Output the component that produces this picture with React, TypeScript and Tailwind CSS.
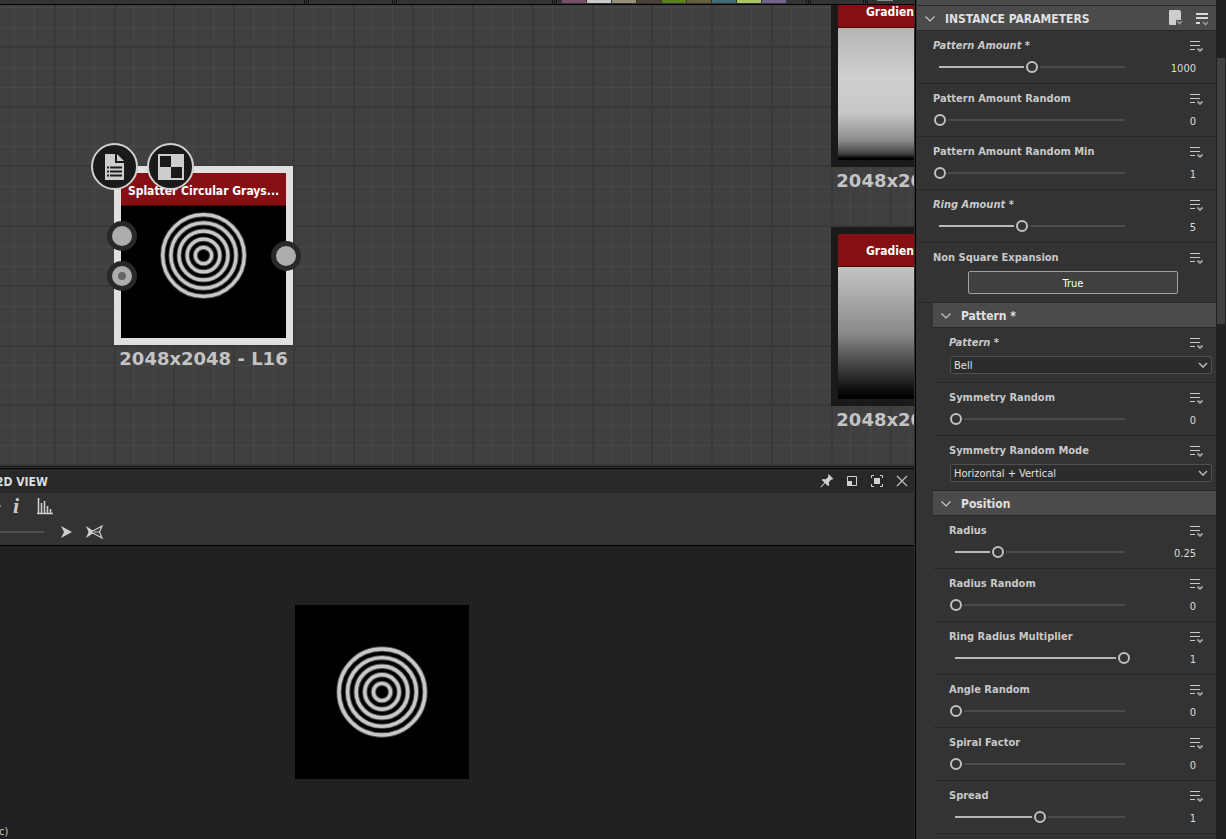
import React, { useState } from 'react';

type SliderParam = { kind: 'slider'; label: string; value: number; min: number; max: number; step: number; changed?: boolean };
type SelectParam = { kind: 'select'; label: string; value: string; options: string[]; changed?: boolean };
type Param = SliderParam | SelectParam;

const instanceParams: SliderParam[] = [
  { kind: 'slider', label: 'Pattern Amount', value: 1000, min: 0, max: 2000, step: 1, changed: true },
  { kind: 'slider', label: 'Pattern Amount Random', value: 0, min: 0, max: 1, step: 0.01 },
  { kind: 'slider', label: 'Pattern Amount Random Min', value: 1, min: 1, max: 10, step: 1 },
  { kind: 'slider', label: 'Ring Amount', value: 5, min: 1, max: 10, step: 1, changed: true },
];

const patternParams: Param[] = [
  { kind: 'select', label: 'Pattern', value: 'Bell', options: ['Bell'], changed: true },
  { kind: 'slider', label: 'Symmetry Random', value: 0, min: 0, max: 1, step: 0.01 },
  { kind: 'select', label: 'Symmetry Random Mode', value: 'Horizontal + Vertical', options: ['Horizontal + Vertical'] },
];

const positionParams: Param[] = [
  { kind: 'slider', label: 'Radius', value: 0.25, min: 0, max: 1, step: 0.01 },
  { kind: 'slider', label: 'Radius Random', value: 0, min: 0, max: 1, step: 0.01 },
  { kind: 'slider', label: 'Ring Radius Multiplier', value: 1, min: 0, max: 1, step: 0.01 },
  { kind: 'slider', label: 'Angle Random', value: 0, min: 0, max: 1, step: 0.01 },
  { kind: 'slider', label: 'Spiral Factor', value: 0, min: 0, max: 1, step: 0.01 },
  { kind: 'slider', label: 'Spread', value: 1, min: 0, max: 2, step: 0.01 },
];

const swatches = ['bg-[#7a4f6b]', 'bg-[#cacaca]', 'bg-[#979078]', 'bg-[#4b4135]', 'bg-[#5b801d]', 'bg-[#675f3e]', 'bg-[#3f6f72]', 'bg-[#a9c766]', 'bg-[#73648f]'];

const MenuIcon: React.FC = () => (
  <svg className="w-4 h-4" viewBox="0 0 16 16" fill="none">
    <path d="M1 3.5h10M1 7.5h10M1 11.5h5" stroke="#c8c8c8" strokeWidth="1.2" />
    <path d="M8.500 10.500l2.500 2.500 2.500-2.500" stroke="#a0a0a0" strokeWidth="1.800" />
  </svg>
);

const Chevron: React.FC = () => (
  <svg className="w-3 h-3 shrink-0" viewBox="0 0 12 12" fill="none">
    <path d="M1.500 3.500L6 8l4.500-4.500" stroke="#c8c8c8" strokeWidth="1.2" />
  </svg>
);

// Concentric bell-shaped rings, softer on the edges
const Rings: React.FC = () => (
  <svg className="block w-full h-full bg-black" viewBox="0 0 174 174" fill="none">
    {[1, 2, 3, 4, 5].map((n) => (
      <g key={n}>
        <circle cx="87" cy="87" r={n * 8.6} stroke="#505050" strokeWidth="5.4" />
        <circle cx="87" cy="87" r={n * 8.6} stroke="#c9c9c9" strokeWidth="3.4" />
      </g>
    ))}
  </svg>
);

const Grid: React.FC = () => {
  const step = 59.75 / 3;
  const lines = Array.from({ length: 130 }, (_, i) => i);
  return (
    <svg className="absolute inset-0 w-full h-full" shapeRendering="crispEdges">
      {lines.filter((i) => i % 3 !== 0).map((i) => (
        <g key={i} fill="#484848">
          <rect x={Math.round(-6 + i * step)} y="0" width="1" height="100%" />
          <rect x="0" y={Math.round(-18 + i * step)} width="100%" height="1" />
        </g>
      ))}
      {lines.filter((i) => i % 3 === 0).map((i) => (
        <g key={i} fill="#393939">
          <rect x={Math.round(-6 + i * step)} y="0" width="2" height="100%" />
          <rect x="0" y={Math.round(-19 + i * step)} width="100%" height="2" />
        </g>
      ))}
    </svg>
  );
};

const Port: React.FC<{ className: string; dot?: boolean }> = ({ className, dot }) => (
  <div className={`absolute w-[30px] h-[30px] rounded-full bg-[#282828] flex items-center justify-center ${className}`}>
    <div className="w-5 h-5 rounded-full bg-[#adadad] flex items-center justify-center">
      {dot && <div className="w-2 h-2 rounded-full bg-[#666]" />}
    </div>
  </div>
);

const GraphNode: React.FC<{ title: string; place: string; frame: string; titleClass: string; children: React.ReactNode }> = ({ title, place, frame, titleClass, children }) => (
  <div className={`absolute w-[179px] ${place}`}>
    <div className={`h-[179px] border-[7px] ${frame} flex flex-col`}>
      <div className={`h-[33px] shrink-0 bg-[#850f13] border-b border-[#4a0a0c] flex items-center text-white text-xs font-bold whitespace-nowrap ${titleClass}`}>{title}</div>
      <div className="flex-1 min-h-0 relative">{children}</div>
    </div>
    <div className="font-['DejaVu_Sans',sans-serif] text-lg leading-7 font-bold text-[#c4c4c4] text-center whitespace-nowrap">2048x2048 - L16</div>
  </div>
);

const GraphView: React.FC = () => (
  <div className="relative h-[461px] bg-[#404040] overflow-hidden">
    <Grid />
    <GraphNode title="Gradient" place="left-[831px] -top-[17px]" frame="border-[#1a1a1a]" titleClass="pl-7 pt-0.5">
      <div className="h-full bg-[linear-gradient(#b5b5b5,#cfcfcf_38%,#c6c6c6_65%,#8c8c8c_85%,#444_95%,#000_99%)]" />
    </GraphNode>
    <GraphNode title="Gradient" place="left-[831px] top-[222px]" frame="border-[#1a1a1a]" titleClass="pl-7 pt-0.5">
      <div className="h-full bg-[linear-gradient(#c4c4c4,#8a8a8a_50%,#000_98%)]" />
    </GraphNode>
    <GraphNode title="Splatter Circular Grays..." place="left-[114px] top-[161px]" frame="border-[#e0e0e0]" titleClass="justify-center pt-1">
      <div className="absolute inset-x-0 bottom-0 h-[165px] [clip-path:inset(33px_0_0_0)]"><Rings /></div>
    </GraphNode>
    <Port className="left-[107px] top-[216px]" />
    <Port className="left-[107px] top-[256px]" dot />
    <Port className="left-[271px] top-[236px]" />
    <button aria-label="Node attributes" className="absolute left-[91px] top-[138px] w-[47px] h-[47px] rounded-full bg-[#1a1a1a] border-2 border-[#d0d0d0] flex items-center justify-center">
      <svg className="w-7 h-7" viewBox="0 0 28 28">
        <path d="M4 1h10v9h9v17H4z" fill="#cdcdcd" />
        <path d="M16 1l7 7h-7z" fill="#cdcdcd" />
        <path d="M6 14.500h2M9 14.500h12M6 18.500h2M9 18.500h12M6 22.500h2M9 22.500h12" stroke="#1a1a1a" strokeWidth="1.8" />
      </svg>
    </button>
    <button aria-label="Show in 2D view" className="absolute left-[147px] top-[138px] w-[47px] h-[47px] rounded-full bg-[#1a1a1a] border-2 border-[#d0d0d0] flex items-center justify-center">
      <svg className="w-7 h-7" viewBox="0 0 28 28">
        <path d="M1 1h26v26H1z" fill="#cdcdcd" />
        <path d="M3 3h11v11H3zM14 14h11v11H14z" fill="#1a1a1a" />
      </svg>
    </button>
  </div>
);

const View2D: React.FC = () => (
  <section className="flex-1 flex flex-col min-h-0 border-t border-[#111]">
    <div className="h-px bg-[#333]" />
    <div className="h-6 bg-[#282828] flex items-center justify-between border-t border-black box-content">
      <h2 className="-ml-1 pt-0.5 text-xs font-bold text-[#dcdcdc]">2D VIEW</h2>
      <div className="flex items-center gap-[9px] pr-1">
        <button aria-label="Pin">
          <svg className="w-4 h-4" viewBox="0 0 16 16">
            <path d="M9.500 1l5 5-1.500.6-1 .2-2.200 2.400.4 3.300-1.200.5-2.800-2.800L2 14.500l-.6-.6L5.500 9.500 2.800 7l.8-1 3.200.2L9 4.200z" fill="#d0d0d0" />
          </svg>
        </button>
        <button aria-label="Float">
          <svg className="w-4 h-4" viewBox="0 0 16 16">
            <path d="M3.500 3.500h9v9h-9z" fill="none" stroke="#d0d0d0" />
            <path d="M3 8h5v5H3z" fill="#d0d0d0" />
          </svg>
        </button>
        <button aria-label="Maximize">
          <svg className="w-4 h-4" viewBox="0 0 16 16">
            <path d="M5 2.500H2.500V5M11 2.500h2.500V5M5 13.500H2.500V11M11 13.500h2.500V11" fill="none" stroke="#d0d0d0" />
            <path d="M5 5h6v6H5z" fill="#d0d0d0" />
          </svg>
        </button>
        <button aria-label="Close">
          <svg className="w-4 h-4" viewBox="0 0 16 16">
            <path d="M3 3l10 10M13 3L3 13" stroke="#c0c0c0" strokeWidth="1.2" />
          </svg>
        </button>
      </div>
    </div>
    <div className="h-[52px] bg-[#333] border-b border-black box-content">
      <div className="h-[26px] flex items-center">
        <div className="w-px h-0.5 bg-[#808080]" />
        <button aria-label="Information" className="ml-[7px] w-4 font-['Liberation_Serif',serif] italic font-bold text-[22px] leading-6 text-[#cdcdcd]">i</button>
        <button aria-label="Histogram" className="ml-3">
          <svg className="w-[18px] h-[18px]" viewBox="0 0 18 18">
            <path d="M1 16.500h16M2.500 1v15M5.500 6v10M8.500 4v12M11.500 9v7M14.500 12v4" stroke="#cdcdcd" strokeWidth="1.6" />
          </svg>
        </button>
      </div>
      <div className="h-[26px] flex items-center">
        <div className="w-11 h-0.5 bg-[#505050]" />
        <button aria-label="Play" className="ml-4">
          <svg className="w-3 h-4" viewBox="0 0 12 16"><path d="M1 2l11 6-11 6 3-6z" fill="#cdcdcd" /></svg>
        </button>
        <button aria-label="Mirror" className="ml-[13px]">
          <svg className="w-[18px] h-4" viewBox="0 0 18 16" fill="none">
            <path d="M1 2l9 6-9 6 2.500-6z" fill="#cdcdcd" />
            <path d="M17 2L6 8l11 6-2.500-6z" fill="#333" stroke="#cdcdcd" strokeWidth="1.200" />
            <path d="M14.500 8H9" stroke="#cdcdcd" />
          </svg>
        </button>
      </div>
    </div>
    <div className="flex-1 min-h-0 bg-[#212121] flex flex-col items-start justify-between">
      <div className="mt-[59px] ml-[295px] w-[174px] h-[174px]"><Rings /></div>
      <p className="-ml-px text-[11px] leading-[14px] text-[#c8c8c8]">c)</p>
    </div>
  </section>
);

const ParamShell: React.FC<{ id: string; label: string; changed?: boolean; children: React.ReactNode }> = ({ id, label, changed, children }) => (
  <div className="pl-4 border-b border-[#282828]">
    <div className="h-7 pt-0.5 flex items-center justify-between pr-[11px]">
      <label htmlFor={id} className={`text-[11px] font-bold text-[#c8c8c8] ${changed ? 'italic' : ''}`}>{changed ? `${label} *` : label}</label>
      <button aria-label={`${label} menu`}><MenuIcon /></button>
    </div>
    {children}
  </div>
);

const SliderRow: React.FC<{ param: SliderParam }> = ({ param }) => {
  const [value, setValue] = useState(param.value);
  const fill = (value - param.min) / (param.max - param.min);
  const stop = `calc(6px + (100% - 12px) * ${fill})`;
  return (
    <ParamShell id={param.label} label={param.label} changed={param.changed}>
      <div className="h-6 flex items-start pl-px pr-5">
        <input
          id={param.label}
          type="range"
          min={param.min}
          max={param.max}
          step={param.step}
          value={value}
          onChange={(e) => setValue(Number(e.target.value))}
          style={{ backgroundImage: `linear-gradient(to right, transparent 5px, #b8b8b8 5px, #b8b8b8 ${stop}, #4b4b4b ${stop}, #4b4b4b calc(100% - 5px), transparent calc(100% - 5px))` }}
          className="mt-0.5 flex-1 min-w-0 h-3 appearance-none bg-[length:100%_2px] bg-center bg-no-repeat [&::-webkit-slider-thumb]:appearance-none [&::-webkit-slider-thumb]:w-3 [&::-webkit-slider-thumb]:h-3 [&::-webkit-slider-thumb]:rounded-full [&::-webkit-slider-thumb]:bg-[#333] [&::-webkit-slider-thumb]:border-2 [&::-webkit-slider-thumb]:border-[#c0c0c0] [&::-webkit-slider-thumb]:shadow-[0_0_0_2px_#333]"
        />
        <output htmlFor={param.label} className="w-[66px] mt-0.5 text-right text-[11px] leading-4 text-[#dcdcdc]">{value}</output>
      </div>
    </ParamShell>
  );
};

const SelectRow: React.FC<{ param: SelectParam }> = ({ param }) => (
  <ParamShell id={param.label} label={param.label} changed={param.changed}>
    <div className="relative pl-px pr-1 pb-2">
      <select id={param.label} defaultValue={param.value} className="block w-full h-[18px] appearance-none rounded-xs border border-[#505050] bg-[#2c2c2c] pl-[3px] pt-px text-[11px] leading-4 text-[#e0e0e0]">
        {param.options.map((o) => <option key={o}>{o}</option>)}
      </select>
      <svg className="absolute right-2 top-1 w-[10px] h-[10px] pointer-events-none" viewBox="0 0 10 10" fill="none">
        <path d="M1 3l4 4 4-4" stroke="#b0b0b0" strokeWidth="1.600" />
      </svg>
    </div>
  </ParamShell>
);

const ParamGroup: React.FC<{ title: string; params: Param[] }> = ({ title, params }) => (
  <section className="ml-4">
    <h3 className="h-[25px] bg-[#4b4b4b] border-b border-[#282828]">
      <button className="w-full h-full pl-[7px] pt-0.5 flex items-center gap-[9px] text-xs font-bold text-[#e0e0e0]"><Chevron />{title}</button>
    </h3>
    {params.map((p) => p.kind === 'slider' ? <SliderRow key={p.label} param={p} /> : <SelectRow key={p.label} param={p} />)}
  </section>
);

const Properties: React.FC = () => {
  const [expansion, setExpansion] = useState(true);
  return (
    <aside className="w-[311px] shrink-0 flex bg-[#333] border-l border-black overflow-hidden">
      <div className="flex-1 min-w-0 pl-px overflow-hidden">
        <div className="h-1.5 bg-[#4b4b4b] border-b border-[#282828]" />
        <div className="h-[25px] bg-[#4b4b4b] border-b border-[#282828] flex items-center justify-between pl-[7px] pr-[5px]">
          <h2>
            <button className="pt-0.5 flex items-center gap-[9px] text-xs font-bold text-[#e0e0e0]"><Chevron />INSTANCE PARAMETERS</button>
          </h2>
          <div className="flex gap-[11px]">
            <button aria-label="Presets">
              <svg className="w-4 h-4" viewBox="0 0 16 16">
                <path d="M2 0h9a2 2 0 0 1 2 2v8H8v5H2a1 1 0 0 1-1-1V1a1 1 0 0 1 1-1z" fill="#cdcdcd" />
                <path d="M9 11l2.500 2.500L14 11" fill="none" stroke="#999" strokeWidth="1.600" />
              </svg>
            </button>
            <button aria-label="Parameters menu">
              <svg className="w-4 h-4" viewBox="0 0 16 16" fill="none">
                <path d="M1 4h12M1 8h12M1 13h4" stroke="#d8d8d8" strokeWidth="2" />
                <path d="M8 12l2.500 2.500L13 12" stroke="#999" strokeWidth="1.600" />
              </svg>
            </button>
          </div>
        </div>
        {instanceParams.map((p) => <SliderRow key={p.label} param={p} />)}
        <ParamShell id="expansion" label="Non Square Expansion">
          <div className="pl-[35px] pr-[38px] pb-2">
            <button id="expansion" onClick={() => setExpansion(!expansion)} className="block w-full h-[23px] pt-0.5 rounded-xs border border-[#a0a0a0] bg-[#404040] text-[11px] leading-4 text-white">{expansion ? 'True' : 'False'}</button>
          </div>
        </ParamShell>
        <ParamGroup title="Pattern *" params={patternParams} />
        <ParamGroup title="Position" params={positionParams} />
      </div>
      <div className="w-[10px] bg-[#212121] pt-[58px] px-px">
        <div className="h-[266px] bg-[#404040]" />
      </div>
    </aside>
  );
};

const Grip: React.FC = () => (
  <div className="w-[5px] h-1 shrink-0 flex justify-between">
    <div className="w-px bg-[#151515]" />
    <div className="w-px bg-[#151515]" />
    <div className="w-px bg-[#151515]" />
  </div>
);

const App: React.FC = () => (
  <div className="h-screen flex bg-[#333] overflow-hidden font-['DejaVu_Sans_Condensed','DejaVu_Sans',sans-serif]">
    <main className="flex-1 min-w-0 flex flex-col border-r border-[#2e2e2e]">
      <div className="h-[5px] bg-[#333] border-b border-black flex items-start pl-[304px]">
        <Grip />
        <div className="w-[83px] shrink-0" />
        <Grip />
        <div className="w-[155px] shrink-0" />
        <Grip />
        <div className="ml-[5px] flex gap-px">
          {swatches.map((c) => <div key={c} className={`w-6 h-[3px] ${c}`} />)}
        </div>
        <div className="w-5 shrink-0" />
        <Grip />
        <div className="w-[52px] shrink-0" />
        <Grip />
        <div className="ml-[9px] w-4 h-px bg-[#8a8a8a]" />
      </div>
      <GraphView />
      <View2D />
    </main>
    <Properties />
  </div>
);

export default App;
